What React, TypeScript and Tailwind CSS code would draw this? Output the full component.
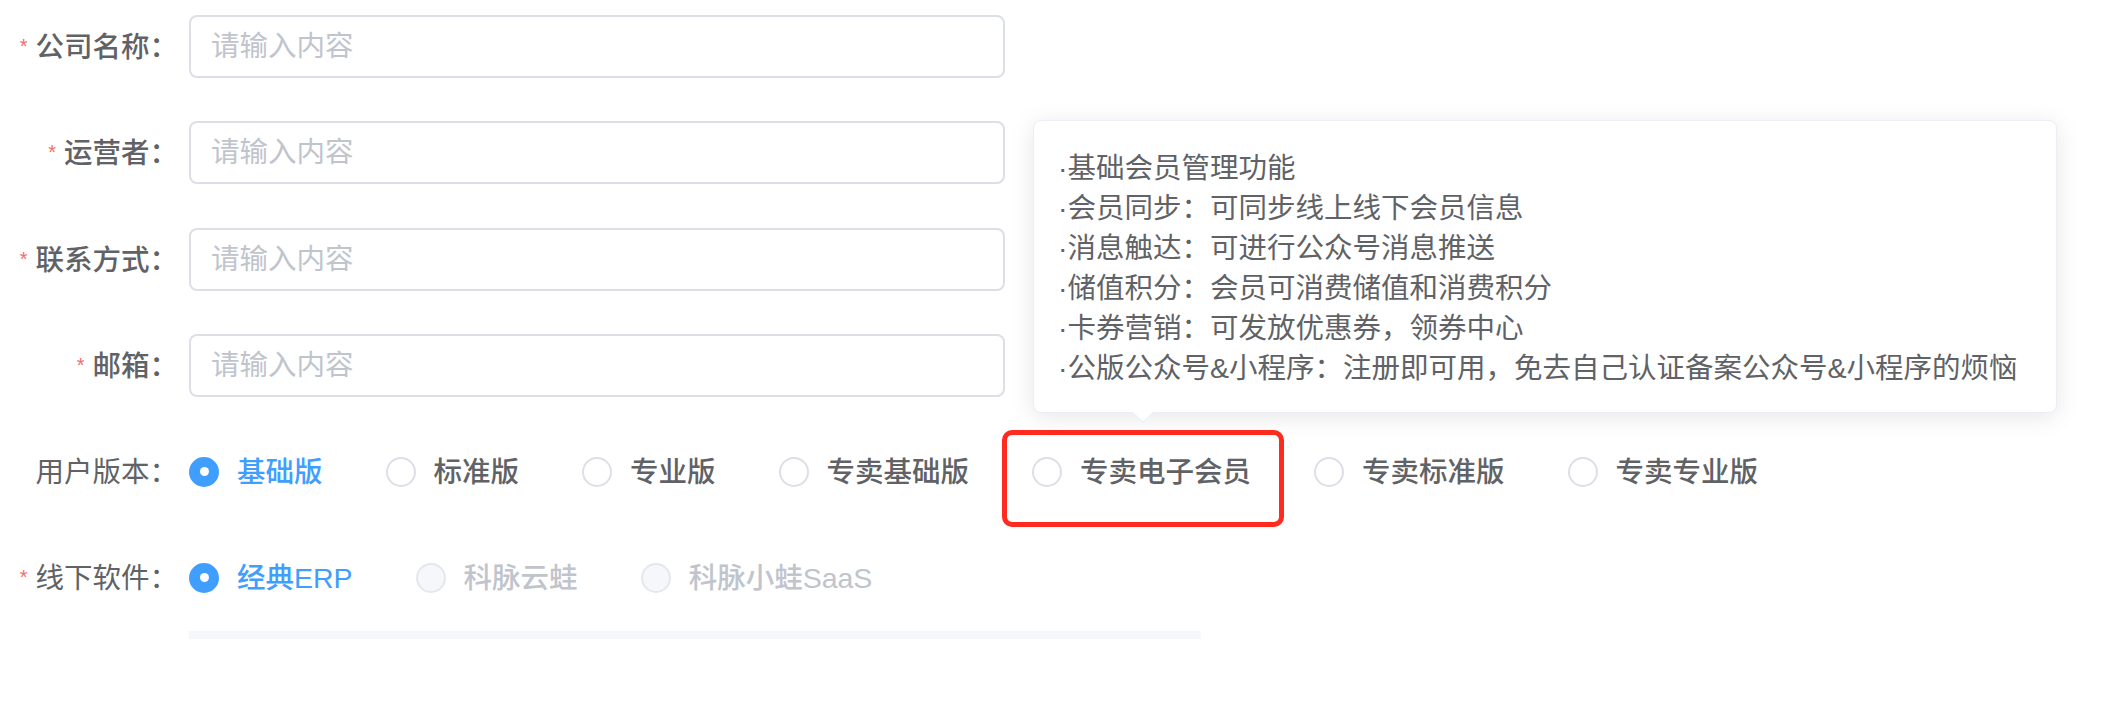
import React from 'react';

const FONT = { fontFamily: '"Liberation Sans", "Noto Sans CJK SC", sans-serif' };

const TIPS = [
  '·基础会员管理功能',
  '·会员同步：可同步线上线下会员信息',
  '·消息触达：可进行公众号消息推送',
  '·储值积分：会员可消费储值和消费积分',
  '·卡券营销：可发放优惠券，领券中心',
  '·公版公众号&小程序：注册即可用，免去自己认证备案公众号&小程序的烦恼',
];

const VERSIONS = ['基础版', '标准版', '专业版', '专卖基础版', '专卖电子会员', '专卖标准版', '专卖专业版'];

function Label({ text, required, bold }: { text: string; required?: boolean; bold?: boolean }) {
  return (
    <div
      className={`w-[189px] shrink-0 pr-[11px] text-right text-[28.5px] leading-[40px] text-[#606266] ${
        bold ? 'font-medium' : ''
      }`}
    >
      {required && <span className="mr-[8px] align-[4px] text-[20px] text-[#f56c6c]">*</span>}
      {text}
    </div>
  );
}

function Radio({
  label,
  checked,
  disabled,
  children,
}: {
  label: string;
  checked?: boolean;
  disabled?: boolean;
  children?: React.ReactNode;
}) {
  let circle = 'border-[#dcdfe6] bg-white';
  let text = 'text-[#606266]';
  if (checked) {
    circle = 'border-[#409eff] bg-[#409eff]';
    text = 'text-[#409eff]';
  } else if (disabled) {
    circle = 'border-[#e4e7ed] bg-[#f5f7fa]';
    text = 'text-[#c0c4cc]';
  }
  return (
    <div className="relative mr-[63px] flex h-[30px] items-center">
      <span className={`flex h-[30px] w-[30px] items-center justify-center rounded-full border-2 ${circle}`}>
        {checked && <span className="h-[9px] w-[9px] rounded-full bg-white" />}
      </span>
      <span className={`ml-[18px] text-[28.5px] font-medium leading-[40px] ${text}`}>{label}</span>
      {children}
    </div>
  );
}

function Field({ label }: { label: string }) {
  return (
    <div className="flex h-[63px] items-center">
      <Label text={label} required bold />
      <input
        placeholder="请输入内容"
        className="h-[63px] w-[816px] rounded-[8px] border-2 border-[#dcdfe6] bg-white px-[20px] text-[28.5px] text-[#606266] outline-none placeholder:text-[#c0c4cc]"
      />
    </div>
  );
}

export default function App() {
  return (
    <div className="relative h-[704px] w-[2112px] overflow-hidden bg-white" style={FONT}>
      <div className="flex flex-col gap-[43.3px] pt-[15px]">
        <Field label="公司名称：" />
        <Field label="运营者：" />
        <Field label="联系方式：" />
        <Field label="邮箱：" />

        <div className="flex h-[63px] items-center">
          <Label text="用户版本：" />
          {VERSIONS.map((v, i) =>
            i === 4 ? (
              <Radio key={v} label={v}>
                {/* highlight box */}
                <div className="pointer-events-none absolute left-[-30px] top-[-27px] h-[97px] w-[282px] rounded-[10px] border-[5px] border-[#ff2b1f]" />
                {/* popover */}
                <div className="absolute bottom-[74px] left-[1px] z-10 w-[1024px] rounded-[8px] border border-[#ebeef5] bg-white pb-[24px] pl-[24px] pt-[27px] shadow-[0_4px_24px_rgba(0,0,0,0.1)]">
                  {TIPS.map((t) => (
                    <div key={t} className="whitespace-nowrap text-[28.5px] leading-[40px] text-[#606266]">
                      {t}
                    </div>
                  ))}
                  <div className="absolute bottom-[-8px] left-[101px] h-[16px] w-[16px] rotate-45 border-b border-r border-[#ebeef5] bg-white" />
                </div>
              </Radio>
            ) : (
              <Radio key={v} label={v} checked={i === 0} />
            ),
          )}
        </div>

        <div className="flex h-[63px] items-center">
          <Label text="线下软件：" required />
          <Radio label="经典ERP" checked />
          <Radio label="科脉云蛙" disabled />
          <Radio label="科脉小蛙SaaS" disabled />
        </div>
      </div>
      <div className="ml-[189px] mt-[22px] h-[8px] w-[1012px] bg-[#f5f7fa]" />
    </div>
  );
}
